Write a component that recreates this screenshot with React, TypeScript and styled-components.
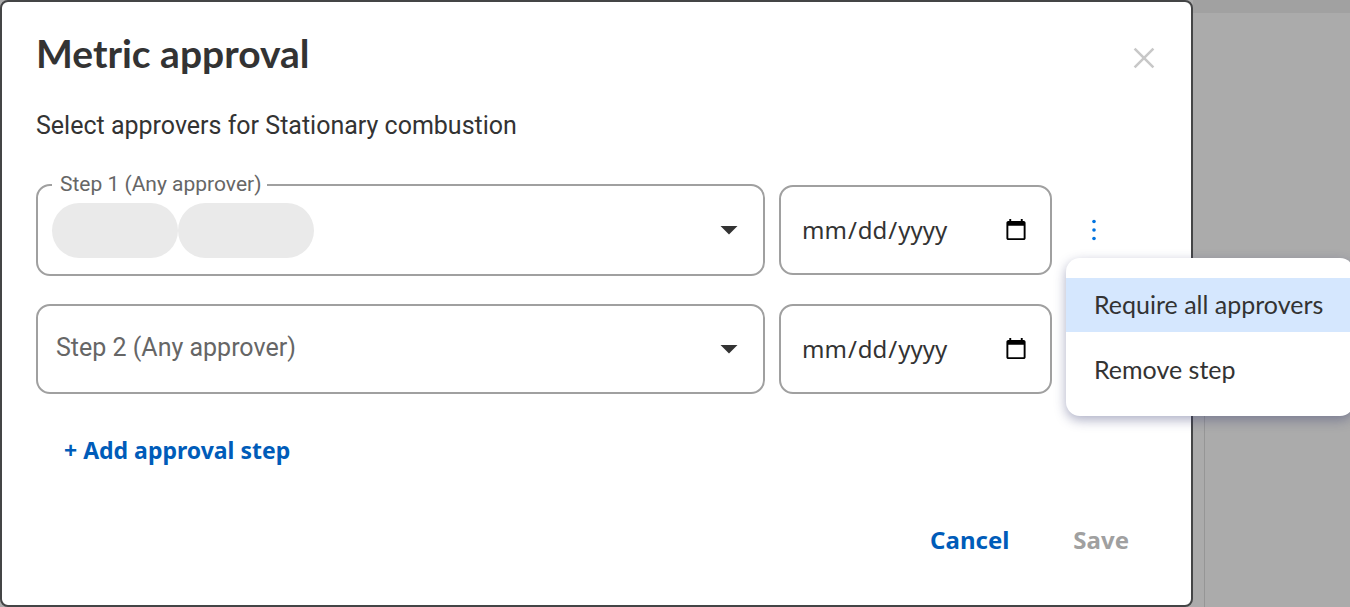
import React, { useState } from "react";
import styled, { createGlobalStyle } from "styled-components";

const GlobalStyle = createGlobalStyle`
  *, *::before, *::after { box-sizing: border-box; }
  body {
    margin: 0;
    overflow-x: hidden;
    background: #ababab;
    color: #333;
    font-family: "Noto Sans", "Open Sans", sans-serif;
    font-size: 24px;
  }
`;

const Page = styled.div`
  display: flex;
  min-height: 100vh;
  overflow: hidden;
`;

const Dialog = styled.section`
  flex: 1;
  min-width: 0;
  display: flex;
  flex-direction: column;
  padding: 24px 34px 32px;
  border: 2px solid #444546;
  border-radius: 8px;
  background: #fff;
`;

const Backdrop = styled.div`
  flex: 0 0 157px;
  display: flex;
  flex-direction: column;
`;

const BackdropBar = styled.div`
  height: 13px;
  background: #a1a1a1;
`;

const BackdropPanel = styled.div`
  flex: 1;
  margin: 300px 0 0 11px;
  border-left: 1px solid #969696;
`;

const Header = styled.header`
  display: flex;
  align-items: flex-end;
  justify-content: space-between;
`;

const Title = styled.h1`
  margin: 0;
  font: 700 39px/54px Lato, sans-serif;
`;

const CloseButton = styled.button`
  display: flex;
  padding: 11px 2px;
  border: 0;
  background: none;
  color: #c8c8c8;
`;

const Intro = styled.p`
  margin: 30px 0 42px;
  font: 25px/32px Roboto, sans-serif;
`;

const Steps = styled.div`
  display: flex;
  flex-direction: column;
  gap: 28px;
  padding-right: 35px;
`;

const StepRow = styled.div`
  display: flex;
  align-items: center;
  gap: 14px;
`;

const Field = styled.div<{ $filled: boolean }>`
  position: relative;
  flex: 1;
  min-width: 0;
  height: ${(p) => (p.$filled ? 92 : 90)}px;
  display: flex;
  align-items: center;
  padding-left: 14px;
  border: 2px solid #a0a0a0;
  border-radius: 14px;
`;

const FloatingLabel = styled.label`
  position: absolute;
  top: -14px;
  left: 14px;
  padding: 0 6px 0 8px;
  background: #fff;
  color: #666;
  font: 21px/24px Roboto, sans-serif;
`;

const Chip = styled.span<{ $width: number }>`
  flex: 0 0 ${(p) => p.$width}px;
  height: 55px;
  border-radius: 28px;
  background: #eaeaea;
`;

const Select = styled.select`
  flex: 1;
  min-width: 0;
  height: 100%;
  padding: 0 60px 2px 4px;
  border: 0;
  outline: 0;
  appearance: none;
  background: none;
  color: #666;
  font: 25px/32px Roboto, sans-serif;
`;

const Caret = styled.svg`
  position: absolute;
  right: 25px;
  fill: #333;
  pointer-events: none;
`;

const DateInput = styled.input`
  width: 273px;
  height: 90px;
  padding: 0 20px;
  border: 2px solid #a0a0a0;
  border-radius: 14px;
  background: #fff;
  color: #333;
  font: 24px/32px "Noto Sans", sans-serif;
`;

const MenuAnchor = styled.div`
  position: relative;
  flex: 0 0 56px;
  display: flex;
  justify-content: center;
`;

const KebabButton = styled.button`
  display: flex;
  padding: 17px 12px;
  border: 0;
  background: none;
  color: #0073e0;
`;

const Menu = styled.div`
  position: absolute;
  z-index: 1;
  top: 100%;
  left: 0;
  width: 288px;
  display: flex;
  flex-direction: column;
  gap: 11px;
  padding: 20px 0 19px;
  border-radius: 14px;
  background: #fff;
  box-shadow: 0 4px 12px rgba(50, 55, 110, 0.4);
`;

const MenuItem = styled.button<{ $active?: boolean }>`
  height: 54px;
  padding: 0 28px 2px;
  border: 0;
  background: ${(p) => (p.$active ? "#d5e7fe" : "none")};
  color: #333;
  font: 25px/32px Lato, sans-serif;
  text-align: left;
  white-space: nowrap;
`;

const TextButton = styled.button`
  padding: 8px 28px;
  border: 0;
  background: none;
  color: #005cb9;
  font: 700 24px/32px "Noto Sans", sans-serif;
  &:disabled { color: #a0a0a0; }
`;

const AddButton = styled(TextButton)`
  align-self: flex-start;
  margin-top: 32px;
  font-size: 23px;
`;

const Footer = styled.footer`
  display: flex;
  justify-content: flex-end;
  gap: 8px;
  margin-top: 42px;
`;

interface StepProps {
  number: number;
  chips: number[];
  children?: React.ReactNode;
}

function Step({ number, chips, children }: StepProps) {
  const id = `step-${number}`;
  const label = `Step ${number} (Any approver)`;
  const filled = chips.length > 0;
  return (
    <StepRow>
      <Field $filled={filled}>
        {filled && <FloatingLabel htmlFor={id}>{label}</FloatingLabel>}
        {chips.map((width, i) => (
          <Chip key={i} $width={width} />
        ))}
        <Select id={id} aria-label={label}>
          <option>{filled ? "" : label}</option>
        </Select>
        <Caret width="18" height="10" viewBox="0 0 18 10" aria-hidden="true">
          <path d="M0.5 1h17L9 9.5z" />
        </Caret>
      </Field>
      <DateInput type="date" aria-label={`Step ${number} due date`} />
      <MenuAnchor>{children}</MenuAnchor>
    </StepRow>
  );
}

export default function App() {
  const [menuOpen, setMenuOpen] = useState(true);
  return (
    <>
      <GlobalStyle />
      <Page>
        <Dialog role="dialog" aria-labelledby="dialog-title">
          <Header>
            <Title id="dialog-title">Metric approval</Title>
            <CloseButton aria-label="Close">
              <svg width="22" height="22" viewBox="0 0 22 22" stroke="currentColor" strokeWidth="2.6">
                <path d="M1.6 1.6l18.8 18.8M20.4 1.6L1.6 20.4" />
              </svg>
            </CloseButton>
          </Header>
          <Intro>Select approvers for Stationary combustion</Intro>
          <Steps>
            <Step number={1} chips={[126, 136]}>
              <KebabButton aria-label="Step actions" aria-expanded={menuOpen} onClick={() => setMenuOpen(!menuOpen)}>
                <svg width="4" height="22" viewBox="0 0 4 22" fill="currentColor">
                  <circle cx="2" cy="2.5" r="1.8" />
                  <circle cx="2" cy="11" r="1.8" />
                  <circle cx="2" cy="19.5" r="1.8" />
                </svg>
              </KebabButton>
              {menuOpen && (
                <Menu role="menu">
                  <MenuItem role="menuitem" $active>Require all approvers</MenuItem>
                  <MenuItem role="menuitem">Remove step</MenuItem>
                </Menu>
              )}
            </Step>
            <Step number={2} chips={[]} />
          </Steps>
          <AddButton>+ Add approval step</AddButton>
          <Footer>
            <TextButton>Cancel</TextButton>
            <TextButton disabled>Save</TextButton>
          </Footer>
        </Dialog>
        <Backdrop>
          <BackdropBar />
          <BackdropPanel />
        </Backdrop>
      </Page>
    </>
  );
}
